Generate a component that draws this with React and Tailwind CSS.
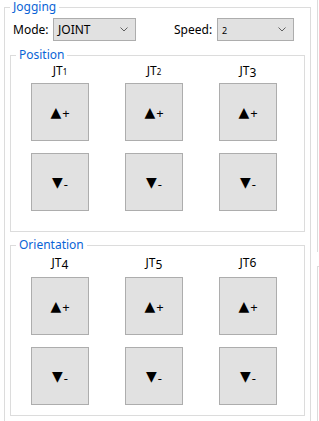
import React from 'react';

const GroupBox = ({ title, className, children }) => (
  <fieldset className={`m-0 min-w-0 border border-[#dcdcdc] p-0 ${className}`}>
    <legend className="ml-[5px] px-[3px] text-[12px] leading-[14px] text-[#0a64d6]">{title}</legend>
    {children}
  </fieldset>
);

const Chevron = () => (
  <svg width="8" height="5" viewBox="0 0 8 5" className="shrink-0">
    <path d="M0.5 0.5 L4 4 L7.5 0.5" fill="none" stroke="#606060" strokeWidth="1" />
  </svg>
);

const Combo = ({ value, className }) => (
  <div className={`flex h-[23px] items-center justify-between border border-[#adadad] bg-[#e1e1e1] pl-[4px] pr-[7px] ${className}`}>
    <span className="leading-none">{value}</span>
    <Chevron />
  </div>
);

const JogButton = ({ up, className = '' }) => (
  <button className={`flex h-[58px] w-[58px] items-center justify-center border border-[#adadad] bg-[#e1e1e1] ${className}`}>
    <span className="font-['DejaVu_Sans'] text-[14px] leading-none">{up ? '▲' : '▼'}</span>
    <span className={`relative ml-[1px] text-[13px] leading-none ${up ? 'top-[1px]' : 'top-[2px]'}`}>
      {up ? '+' : '-'}
    </span>
  </button>
);

const JointLabel = ({ digit, kind }) => (
  <div className="h-[16px] leading-[16px]">
    JT
    {kind === 'small' && <span className="text-[8px]">{digit}</span>}
    {kind === 'low' && <span className="relative top-[2px]">{digit}</span>}
    {kind === 'normal' && <span>{digit}</span>}
  </div>
);

const JointColumn = ({ digit, kind, gapTop }) => (
  <div className="flex w-[58px] flex-col items-center">
    <JointLabel digit={digit} kind={kind} />
    <JogButton up className={gapTop} />
    <JogButton className="mt-[12px]" />
  </div>
);

export default function App() {
  return (
    <div className="flex h-[421px] w-[319px] overflow-hidden bg-white pl-[4px] font-['Noto_Sans'] text-[12px] text-black">
      <GroupBox title="Jogging" className="h-[460px] w-[307px] shrink-0">
        <div className="px-[5px]">
          {/* Mode / Speed row */}
          <div className="mt-[4px] flex items-center pl-[3px]">
            <span className="w-[40px]">Mode:</span>
            <Combo value="JOINT" className="w-[83px]" />
            <span className="ml-[38px] w-[43px]">Speed:</span>
            <Combo value={<span className="text-[9px]">2</span>} className="w-[77px]" />
          </div>

          {/* Position */}
          <GroupBox title="Position" className="mt-[7px] w-[295px]">
            <div className="mt-[1px] flex gap-[36px] pb-[20px] pl-[20px]">
              <JointColumn digit="1" kind="small" gapTop="mt-[4px]" />
              <JointColumn digit="2" kind="small" gapTop="mt-[4px]" />
              <JointColumn digit="3" kind="low" gapTop="mt-[4px]" />
            </div>
          </GroupBox>

          {/* Orientation */}
          <GroupBox title="Orientation" className="mt-[6px] w-[295px]">
            <div className="mt-[3px] flex gap-[36px] pb-[10px] pl-[20px]">
              <JointColumn digit="4" kind="low" gapTop="mt-[6px]" />
              <JointColumn digit="5" kind="low" gapTop="mt-[6px]" />
              <JointColumn digit="6" kind="normal" gapTop="mt-[6px]" />
            </div>
          </GroupBox>
        </div>
      </GroupBox>

      {/* neighbouring panels */}
      <div className="ml-[6px] flex flex-col">
        <div className="h-[324px] w-[10px] border-l border-[#dcdcdc]" />
        <div className="mt-[14px] h-[200px] w-[10px] border-l border-t border-[#dcdcdc]" />
      </div>
    </div>
  );
}
